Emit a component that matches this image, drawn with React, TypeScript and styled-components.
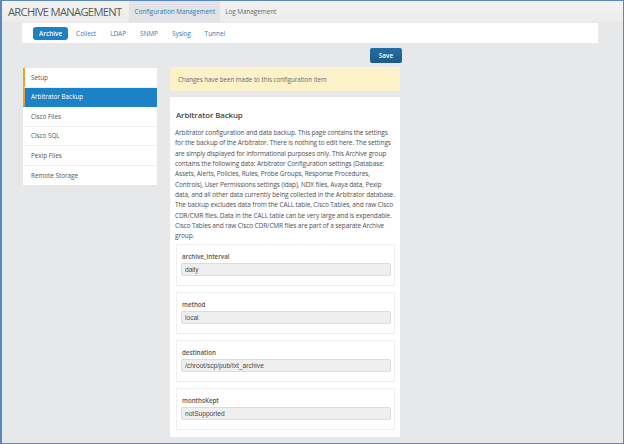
import styled, { createGlobalStyle } from 'styled-components'

const GlobalStyle = createGlobalStyle`
  html, body {
    margin: 0;
    padding: 0;
    background: #e7e8ea;
  }
  * {
    box-sizing: border-box;
  }
`

const Frame = styled.div`
  width: 624px;
  height: 444px;
  border: 1px solid #5d87c4;
  border-left-width: 2px;
  background: #e7e8ea;
  font-family: 'Open Sans', 'Liberation Sans', sans-serif;
  overflow: hidden;
  display: flex;
  flex-direction: column;
  & > * {
    flex-shrink: 0;
  }
`

const TopBar = styled.div`
  height: 21px;
  display: flex;
  align-items: stretch;
  background: linear-gradient(#f3f3f3, #ececec);
`

const AppTitle = styled.div`
  display: flex;
  align-items: center;
  padding: 0 8px 0 6px;
  font-size: 11.2px;
  letter-spacing: -0.7px;
  color: #5a5a5a;
`

const TopTab = styled.div<{ $active?: boolean }>`
  display: flex;
  align-items: center;
  padding: 0 5px;
  font-size: 6.3px;
  color: ${p => (p.$active ? '#2a7bbb' : '#666')};
  background: ${p => (p.$active ? '#e1e3e7' : 'transparent')};
`

const SubNav = styled.div`
  margin: 1px 25px 0 20px;
  height: 20px;
  background: #fff;
  display: flex;
  align-items: center;
  padding-left: 11px;
`

const Pill = styled.div<{ $active?: boolean }>`
  height: 13px;
  padding: 0 ${p => (p.$active ? 6 : 7)}px;
  margin-right: ${p => (p.$active ? 1 : 0)}px;
  border-radius: 3px;
  display: flex;
  align-items: center;
  font-size: 6.4px;
  font-weight: ${p => (p.$active ? 600 : 400)};
  color: ${p => (p.$active ? '#fff' : '#2a7bbb')};
  background: ${p => (p.$active ? '#1b80c4' : 'transparent')};
`

const Toolbar = styled.div`
  width: 400px;
  display: flex;
  justify-content: flex-end;
  padding-top: 5px;
`

const SaveButton = styled.button`
  width: 32px;
  height: 15px;
  border: none;
  border-radius: 2px;
  background: linear-gradient(#236fa3, #1b5a88);
  color: #fff;
  font-family: inherit;
  font-size: 6.4px;
  font-weight: 600;
  padding: 0;
`

const Body = styled.div`
  display: flex;
  align-items: flex-start;
  gap: 13px;
  padding: 4px 0 0 21px;
`

const SideMenu = styled.div`
  width: 134px;
  background: #fff;
  margin-top: 1px;
`

const MenuItem = styled.div<{ $active?: boolean; $marked?: boolean }>`
  height: 19.5px;
  display: flex;
  align-items: center;
  padding-left: 6px;
  font-size: 6.3px;
  color: ${p => (p.$active ? '#fff' : '#555')};
  background: ${p => (p.$active ? '#1b82c6' : '#fff')};
  border-left: 2px solid ${p => (p.$marked ? '#f0a030' : '#fff')};
  border-bottom: 1px solid ${p => (p.$active ? '#1b82c6' : '#eeeeee')};
  &:last-child {
    border-bottom: none;
  }
`

const Main = styled.div`
  width: 230px;
  display: flex;
  flex-direction: column;
  gap: 6px;
`

const Alert = styled.div`
  height: 24px;
  background: #fcf1c8;
  display: flex;
  align-items: center;
  padding-left: 8px;
  font-size: 6.2px;
  color: #6a6a6a;
`

const Panel = styled.div`
  background: #fff;
  padding: 13px 5px 7px 6px;
  display: flex;
  flex-direction: column;
  gap: 6px;
`

const PanelTitle = styled.div`
  font-size: 7.9px;
  line-height: 10px;
  font-weight: 600;
  letter-spacing: -0.1px;
  color: #444;
  margin-bottom: 2px;
`

const Description = styled.p`
  margin: 0 -1px -4px -1px;
  font-size: 6.5px;
  line-height: 10.35px;
  letter-spacing: -0.11px;
  color: #505050;
`

const FieldBox = styled.div`
  border: 1px solid #eeeeee;
  padding: 7px 3px 9px 4px;
`

const FieldLabel = styled.div`
  font-size: 6.2px;
  line-height: 9px;
  font-weight: 600;
  color: #555;
  margin-bottom: 2px;
  padding-left: 1px;
`

const FieldInput = styled.div`
  height: 13px;
  background: #efefef;
  border: 1px solid #dcdcdc;
  border-radius: 2px;
  display: flex;
  align-items: center;
  padding-left: 3px;
  font-family: 'Liberation Sans', Arial, sans-serif;
  font-size: 6.6px;
  color: #4a4a4a;
`

const fields = [
  { name: 'archive_interval', value: 'daily' },
  { name: 'method', value: 'local' },
  { name: 'destination', value: '/chroot/scp/pub/txt_archive' },
  { name: 'monthsKept', value: 'notSupported' },
]

const menu = ['Setup', 'Arbitrator Backup', 'Cisco Files', 'Cisco SQL', 'Pexip Files', 'Remote Storage']

export default function App() {
  return (
    <>
      <GlobalStyle />
      <Frame>
        <TopBar>
          <AppTitle>ARCHIVE MANAGEMENT</AppTitle>
          <TopTab $active>Configuration Management</TopTab>
          <TopTab>Log Management</TopTab>
        </TopBar>
        <SubNav>
          <Pill $active>Archive</Pill>
          <Pill>Collect</Pill>
          <Pill>LDAP</Pill>
          <Pill>SNMP</Pill>
          <Pill>Syslog</Pill>
          <Pill>Tunnel</Pill>
        </SubNav>
        <Toolbar>
          <SaveButton>Save</SaveButton>
        </Toolbar>
        <Body>
          <SideMenu>
            {menu.map((m, i) => (
              <MenuItem key={m} $active={i === 1} $marked={i < 2}>
                {m}
              </MenuItem>
            ))}
          </SideMenu>
          <Main>
            <Alert>Changes have been made to this configuration item</Alert>
            <Panel>
              <PanelTitle>Arbitrator Backup</PanelTitle>
              <Description>
                Arbitrator configuration and data backup. This page contains the settings for the backup of the
                Arbitrator. There is nothing to edit here. The settings are simply displayed for informational
                purposes only. This Archive group contains the following data: Arbitrator Configuration settings
                (Database: Assets, Alerts, Policies, Rules, Probe Groups, Response Procedures, Controls), User
                Permissions settings (ldap), NDX files, Avaya data, Pexip data, and all other data currently being
                collected in the Arbitrator database. The backup excludes data from the CALL table, Cisco Tables,
                and raw Cisco CDR/CMR files. Data in the CALL table can be very large and is expendable. Cisco
                Tables and raw Cisco CDR/CMR files are part of a separate Archive group.
              </Description>
              {fields.map(f => (
                <FieldBox key={f.name}>
                  <FieldLabel>{f.name}</FieldLabel>
                  <FieldInput>{f.value}</FieldInput>
                </FieldBox>
              ))}
            </Panel>
          </Main>
        </Body>
      </Frame>
    </>
  )
}
